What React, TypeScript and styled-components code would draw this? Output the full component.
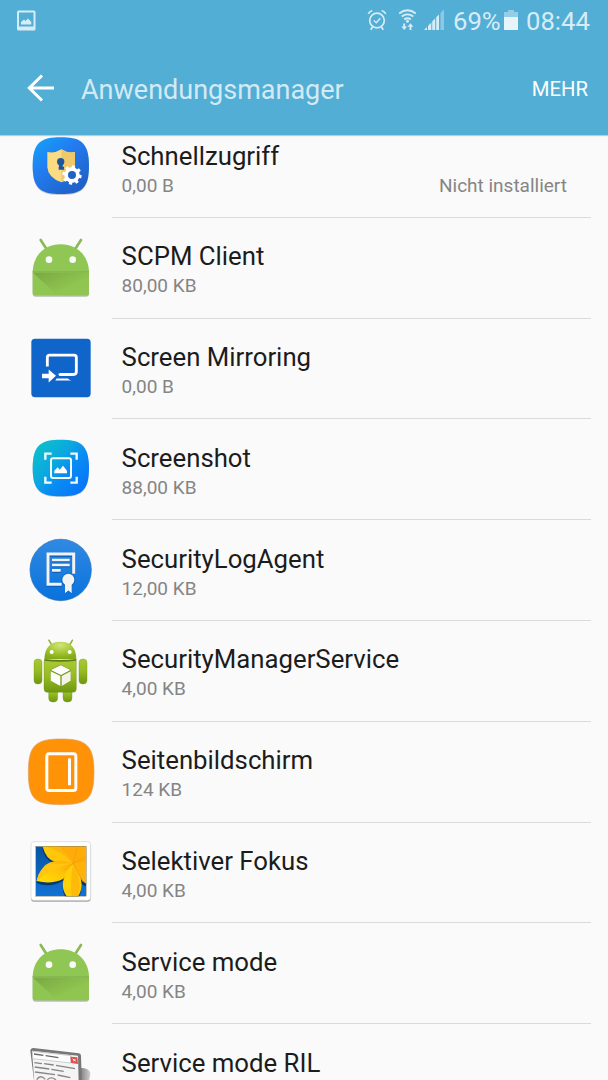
import React from 'react';
import styled, { createGlobalStyle } from 'styled-components';

const GlobalStyle = createGlobalStyle`
  body {
    margin: 0;
    background: #fafafa;
    font-family: Roboto, 'Noto Sans', sans-serif;
  }
`;

const Screen = styled.div`
  display: flex;
  flex-direction: column;
  width: 608px;
  height: 1080px;
  overflow: hidden;
  background: #fafafa;
`;

const Header = styled.header`
  flex: none;
  position: relative;
  height: 135px;
  background: #52aed4;
  box-shadow: 0 1px 1px rgba(0, 0, 0, 0.2);
  z-index: 1;
`;

const StatusBar = styled.div`
  display: flex;
  align-items: center;
  height: 40px;
  padding: 0 18px 0 16px;
  color: #d6ecf6;
`;

const StatusText = styled.span<{ $width: number }>`
  width: ${props => props.$width}px;
  font-size: 25.7px;
  line-height: 40px;
  padding-top: 1px;
  white-space: nowrap;
`;

const Spacer = styled.div`
  flex: 1;
`;

const StatusIcon = styled.svg<{ $gap?: number }>`
  display: block;
  flex: none;
  margin-right: ${props => props.$gap || 0}px;
`;

const AppBar = styled.div`
  display: flex;
  align-items: center;
  height: 95px;
  padding: 0 20px 0 26px;
`;

const BackButton = styled.button`
  display: flex;
  width: 55px;
  padding: 0;
  border: 0;
  background: none;
`;

const Title = styled.h1`
  flex: 1;
  margin: 0;
  padding-top: 4px;
  color: #d3eaf5;
  font-size: 27px;
  font-weight: 400;
  line-height: 36px;
`;

const MoreButton = styled.button`
  padding: 2px 0 0;
  border: 0;
  background: none;
  color: #fff;
  font-family: inherit;
  font-size: 20.3px;
  line-height: 28px;
`;

const List = styled.ul`
  margin: -18px 0 0;
  padding: 0;
  list-style: none;
`;

const Row = styled.li`
  display: flex;
  height: 100.8px;
`;

const IconBox = styled.div`
  flex: none;
  display: flex;
  align-items: center;
  box-sizing: border-box;
  width: 112px;
  padding: 0 0 1px 20px;
`;

const Content = styled.div`
  flex: 1;
  box-sizing: border-box;
  margin-right: 17px;
  padding: 22.5px 24px 0 9.6px;
  border-bottom: 1px solid #dadada;
`;

const Name = styled.div`
  color: #1c1c1c;
  font-size: 25.75px;
  line-height: 32px;
`;

const Details = styled.div`
  display: flex;
  justify-content: space-between;
  margin-top: 2px;
  color: #858585;
  font-size: 19px;
  line-height: 24px;
`;

interface ArtProps {
  top: number;
  children: React.ReactNode;
}

const Art = ({ top, children }: ArtProps) => (
  <svg width="90" height="80" viewBox={`0 ${top} 270 240`} overflow="visible">
    {children}
  </svg>
);

const SQUIRCLE =
  'M123 22C176 22 207 32 207 107C207 178 182 192 123 192C64 192 38 178 38 107C38 36 64 22 123 22Z';

const ShieldIcon = () => (
  <Art top={-9}>
    <defs>
      <linearGradient id="shieldBg" x1="0" y1="0" x2="0.8" y2="1">
        <stop offset="0" stopColor="#12a5fb" />
        <stop offset="0.45" stopColor="#237bef" />
        <stop offset="1" stopColor="#1e5fc4" />
      </linearGradient>
    </defs>
    <path d={SQUIRCLE} fill="#c9cbd0" transform="translate(0 3)" />
    <path d={SQUIRCLE} fill="url(#shieldBg)" />
    <path d="M124 58Q144 71 165 66V112Q162 144 124 157Q84 143 82 112V66Q104 71 124 58Z" fill="#fbdc82" />
    <path d="M124 58Q144 71 165 66V112Q162 144 124 157Z" fill="#efc969" />
    <circle cx="122" cy="95" r="11" fill="#1b559f" />
    <path d="M117 98h11v12h4v9h-16v-9h1z" fill="#1b559f" />
    <g fill="#fff">
      <circle cx="156" cy="135" r="23" />
      {[0, 45, 90, 135, 180, 225, 270, 315].map(angle => (
        <rect key={angle} x="151" y="106" width="10" height="15" rx="2" transform={`rotate(${angle + 10} 156 135)`} />
      ))}
    </g>
    <circle cx="156" cy="135" r="12" fill="#2163c0" />
  </Art>
);

const AndroidIcon = () => (
  <Art top={-7}>
    <defs>
      <linearGradient id="droidFold" x1="0" y1="0" x2="0.7" y2="0.6">
        <stop offset="0" stopColor="#78a842" />
        <stop offset="1" stopColor="#8fc550" />
      </linearGradient>
    </defs>
    <path d="M38 123V190Q38 199 47 199H198Q207 199 207 190V123Z" fill="#b7bdb2" />
    <path d="M62 29L79 55M183 29L166 55" stroke="#8bb956" strokeWidth="8" strokeLinecap="round" />
    <path d="M38 123C40 73 76 42 122 42S205 73 207 123Z" fill="#90c653" />
    <path d="M38 123H207V187Q207 195 199 195H46Q38 195 38 187Z" fill="#8fc651" />
    <path d="M39 127H207V187Q207 195 199 195H112Z" fill="url(#droidFold)" />
    <path d="M38 124.500H207" stroke="#7caf48" strokeWidth="3" />
    <circle cx="87" cy="88" r="10" fill="#fafafa" />
    <circle cx="158" cy="88" r="10" fill="#fafafa" />
  </Art>
);

const MirroringIcon = () => (
  <Art top={-4.5}>
    <rect x="34" y="28" width="178" height="175" rx="11" fill="#1065ca" />
    <path d="M82 111V84Q82 77 89 77H162Q169 77 169 84V127Q169 135 161 135H118" fill="none" stroke="#fff" strokeWidth="8.500" />
    <path d="M66 133H86V120L108 139L86 159V146H66Z" fill="#fff" />
    <path d="M113 131L126 139H118Z" fill="#fff" />
    <path d="M110 147H144Q146 152 155 153H106Z" fill="#fff" />
  </Art>
);

const ScreenshotIcon = () => (
  <Art top={-2}>
    <defs>
      <linearGradient id="shotBg" x1="0.05" y1="0.1" x2="0.95" y2="0.9">
        <stop offset="0" stopColor="#0cc0c9" />
        <stop offset="0.4" stopColor="#0ba7e1" />
        <stop offset="0.6" stopColor="#098cf2" />
        <stop offset="1" stopColor="#0872fb" />
      </linearGradient>
    </defs>
    <path d={SQUIRCLE} fill="#c5cfd6" transform="translate(0 10)" />
    <path d={SQUIRCLE} fill="url(#shotBg)" transform="translate(0 8)" />
    <path
      d="M76 90V72H95M151 72H170V90M170 141V159H151M95 159H76V141"
      fill="none"
      stroke="#f1fcfd"
      strokeWidth="7"
    />
    <rect x="93" y="86" width="60" height="59" rx="6" fill="none" stroke="#f1fcfd" strokeWidth="6" />
    <path d="M103 131V123L113 113L119 120L129 108L141 123V131Z" fill="#fff" />
  </Art>
);

const LogAgentIcon = () => (
  <Art top={0}>
    <defs>
      <linearGradient id="logBg" x1="0" y1="0" x2="0" y2="1">
        <stop offset="0" stopColor="#318ae2" />
        <stop offset="1" stopColor="#0872dc" />
      </linearGradient>
    </defs>
    <circle cx="122" cy="120" r="93.500" fill="#6b94bd" />
    <circle cx="122" cy="119.500" r="92" fill="url(#logBg)" />
    <path d="M125 163H84V73H160V130" fill="none" stroke="#075bad" strokeWidth="9" transform="translate(0 3)" />
    <path d="M125 163H84V72H161V131" fill="none" stroke="#f2f3f4" strokeWidth="9" />
    <path d="M96 90H149M96 105H149M96 121H122" stroke="#075bad" strokeWidth="8" transform="translate(0 3)" />
    <path d="M96 90H149M96 105H149M96 121H122" stroke="#f2f3f4" strokeWidth="8" />
    <circle cx="145" cy="150" r="21" fill="#0b67c2" />
    <circle cx="145" cy="149" r="18" fill="#f2f2f2" />
    <path d="M135 158H155V190L145 182L135 190Z" fill="#f2f2f2" />
    <path d="M135 191L145 183L155 191" fill="none" stroke="#0964ba" strokeWidth="2" />
  </Art>
);

const RobotIcon = () => (
  <Art top={3}>
    <defs>
      <linearGradient id="robotBody" x1="0" y1="0" x2="0" y2="1">
        <stop offset="0" stopColor="#a8c936" />
        <stop offset="0.5" stopColor="#96bb20" />
        <stop offset="1" stopColor="#6e9711" />
      </linearGradient>
      <radialGradient id="robotHead" cx="0.5" cy="0.2" r="0.75">
        <stop offset="0" stopColor="#d3e47b" />
        <stop offset="0.5" stopColor="#a8ca38" />
        <stop offset="1" stopColor="#84ac18" />
      </radialGradient>
    </defs>
    <g fill="url(#robotBody)" stroke="#6a8b1d" strokeWidth="1">
      <rect x="86" y="165" width="27" height="51" rx="12" />
      <rect x="129" y="165" width="27" height="51" rx="12" />
      <rect x="42" y="87" width="24" height="75" rx="11" />
      <rect x="177" y="87" width="24" height="75" rx="11" />
      <path d="M72 92H169V176Q169 187 158 187H83Q72 187 72 176Z" />
    </g>
    <path d="M87 31L96 46M157 31L148 46" stroke="#94ad45" strokeWidth="5" strokeLinecap="round" />
    <path d="M73 88Q75 35 121 35Q168 35 169 88Z" fill="url(#robotHead)" />
    <path d="M73 87Q121 93 169 87V92Q121 98 73 92Z" fill="#607c1a" />
    <circle cx="95" cy="66" r="6" fill="#fff" />
    <circle cx="149" cy="66" r="6" fill="#fff" />
    <path d="M121 104L153 119V154L122 171L91 154V119Z" fill="#7a9b1f" />
    <path d="M122 106L151 120L123 135L93 120Z" fill="#fff" />
    <path d="M92 124L121 138V168L92 152Z" fill="#fdfdf8" />
    <path d="M152 124L125 138V168L152 152Z" fill="#f1f4e6" />
  </Art>
);

const SidePanelIcon = () => (
  <Art top={5}>
    <path
      d="M123 26C198 26 222 44 222 125C222 206 202 223 123 223C44 223 25 206 25 125C25 44 48 26 123 26Z"
      fill="#ff9207"
      stroke="#dda260"
      strokeWidth="2"
    />
    <rect x="80.500" y="70.500" width="87" height="110" rx="7" fill="none" stroke="#fff" strokeWidth="9" />
    <rect x="144" y="84" width="9" height="81" rx="2" fill="#fff" />
  </Art>
);

const FlowerIcon = () => (
  <Art top={1}>
    <defs>
      <clipPath id="photoClip">
        <rect x="47" y="44" width="152" height="150" />
      </clipPath>
      <linearGradient id="photoBg" x1="0" y1="0" x2="0" y2="1">
        <stop offset="0" stopColor="#0754a1" />
        <stop offset="1" stopColor="#1173d6" />
      </linearGradient>
      <linearGradient id="petal" x1="0" y1="1" x2="1" y2="0">
        <stop offset="0" stopColor="#ffe007" />
        <stop offset="1" stopColor="#ffab09" />
      </linearGradient>
    </defs>
    <rect x="33" y="33" width="179" height="177" rx="9" fill="#a6a6a6" />
    <rect x="33" y="30" width="179" height="176" rx="9" fill="#fff" stroke="#d4d4d4" strokeWidth="2" />
    <g clipPath="url(#photoClip)">
      <rect x="47" y="44" width="152" height="150" fill="url(#photoBg)" />
      <path
        d="M67 44Q75 79 103 91Q64 95 50 148Q90 164 130 141Q124 180 144 199H171Q188 181 184 151Q192 157 199 157V44Z"
        fill="#07386d"
        transform="translate(-1 6)"
      />
      <path d="M67 40Q76 85 109 92Q135 97 160 95Q133 55 117 40Z" fill="#ffc60a" />
      <path d="M110 40H199V96H160Q132 66 110 40Z" fill="#ffac0a" />
      <path d="M160 95Q96 75 69 108Q55 123 50 148Q96 159 130 141Q148 121 160 95Z" fill="url(#petal)" />
      <path d="M160 95Q184 129 185 159Q184 182 171 199H144Q123 174 130 146Q136 119 160 95Z" fill="#ffd006" />
      <path d="M160 95L199 90V157Q177 145 160 95Z" fill="#ffb30a" />
      <path d="M50 148Q91 109 160 95L89 98Q58 112 50 148Z" fill="#ffc511" />
      <path d="M160 95Q149 141 155 199H171Q192 156 160 95Z" fill="#ffb90a" />
      <path d="M77 44Q130 62 160 95L119 44Z" fill="#ffb60c" />
      <path d="M160 95L174 40M160 95L199 76M160 95L190 151M160 95L130 118" stroke="#f49b08" strokeWidth="2" />
    </g>
    <rect x="47" y="44" width="152" height="150" fill="none" stroke="#746c39" strokeWidth="1" />
  </Art>
);

const DocumentIcon = () => (
  <Art top={42}>
    <defs>
      <linearGradient id="docShadow" x1="0" y1="0" x2="1" y2="0">
        <stop offset="0" stopColor="#808080" />
        <stop offset="1" stopColor="#d0d0d0" />
      </linearGradient>
    </defs>
    <path d="M181 143Q212 144 211 164L196 230H181Z" fill="url(#docShadow)" />
    <path d="M31 92Q32 84 40 84L177 100Q183 101 183 108L187 230H48Z" fill="#777" />
    <path d="M36 92L174 107L177 230H46Z" fill="#f4f4f4" />
    <path d="M37 94L153 107V129L38 116Z" fill="#fff" stroke="#b6b6b6" strokeWidth="2" />
    <path d="M42 102L70 106M77 107L115 113" stroke="#666" strokeWidth="4" />
    <path d="M151 110L172 112L174 132L153 129Z" fill="#e14f48" />
    <path d="M158 117L167 123M166 118L160 123" stroke="#fff" strokeWidth="3" />
    <path
      d="M43 128L66 131M72 131L101 135M108 136L165 146M44 141L88 147M94 148L131 154M45 156L105 164M113 165L151 173"
      stroke="#858585"
      strokeWidth="4"
    />
    <path d="M50 179Q61 162 76 178M82 179Q94 168 108 180" fill="none" stroke="#8c8c8c" strokeWidth="4" />
  </Art>
);

const apps = [
  { name: 'Schnellzugriff', size: '0,00 B', note: 'Nicht installiert', Icon: ShieldIcon },
  { name: 'SCPM Client', size: '80,00 KB', Icon: AndroidIcon },
  { name: 'Screen Mirroring', size: '0,00 B', Icon: MirroringIcon },
  { name: 'Screenshot', size: '88,00 KB', Icon: ScreenshotIcon },
  { name: 'SecurityLogAgent', size: '12,00 KB', Icon: LogAgentIcon },
  { name: 'SecurityManagerService', size: '4,00 KB', Icon: RobotIcon },
  { name: 'Seitenbildschirm', size: '124 KB', Icon: SidePanelIcon },
  { name: 'Selektiver Fokus', size: '4,00 KB', Icon: FlowerIcon },
  { name: 'Service mode', size: '4,00 KB', Icon: AndroidIcon },
  { name: 'Service mode RIL', size: '', Icon: DocumentIcon },
];

const App = () => (
  <Screen>
    <GlobalStyle />
    <Header>
      <StatusBar>
        <StatusIcon width="20" height="21" viewBox="0 0 20 21">
          <path
            fillRule="evenodd"
            d="M2.500 0.500H18Q19.500 0.500 19.500 2V19Q19.500 20.500 18 20.500H2.500Q1 20.500 1 19V2Q1 0.500 2.500 0.500ZM3 2.500V16.500H17.500V2.500Z"
            fill="currentColor"
          />
          <path d="M5 14.500V12L8 9.500L9.500 11L12 8.500L15.300 12V14.500Z" fill="currentColor" />
        </StatusIcon>
        <Spacer />
        <StatusIcon $gap={11} width="20" height="22" viewBox="0 0 20 22" fill="none" stroke="currentColor">
          <circle cx="10" cy="11.500" r="7.300" strokeWidth="1.700" />
          <path d="M1.200 4.800Q2.500 2.400 5.300 1.500M14.700 1.500Q17.500 2.400 18.800 4.800" strokeWidth="1.600" />
          <path d="M6.800 11.500L9.300 13.800L13.300 9.200" strokeWidth="1.500" />
          <path d="M5.500 18L3.800 20.800M14.500 18L16.200 20.800" strokeWidth="1.800" />
        </StatusIcon>
        <StatusIcon $gap={7} width="19" height="22" viewBox="0 0 19 22" fill="none" stroke="currentColor">
          <path
            d="M1.200 4.400Q9.500 -1.800 17.800 4.400M3.700 7.600Q9.500 3.200 15.300 7.600M6.200 10.500Q9.500 8 12.800 10.500"
            strokeWidth="1.900"
          />
          <circle cx="9.500" cy="12.300" r="1.500" fill="currentColor" stroke="none" />
          <path d="M6.200 14.500V19M12.500 21V16" strokeWidth="1.900" />
          <path d="M3.300 17.500H9.100L6.200 21ZM9.600 17.700H15.400L12.500 14.200Z" fill="currentColor" stroke="none" />
        </StatusIcon>
        <StatusIcon $gap={9} width="20" height="22" viewBox="0 0 20 22" fill="currentColor">
          <path d="M0 21L3 18V21ZM4 17L7.300 13.500V21H4ZM8.200 12.500L11.200 9.300V21H8.200ZM12.200 8.300L15 5.400V21H12.200Z" />
          <path d="M16.500 4L20 0.500V21H16.500Z" opacity="0.450" />
        </StatusIcon>
        <StatusText $width={51}>69%</StatusText>
        <StatusIcon $gap={8} width="14" height="20" viewBox="0 0 14 20" fill="currentColor">
          <path d="M4 0H10V2H14V7H0V2H4Z" opacity="0.500" />
          <path d="M0 7H14V20H0Z" fill="#e7f5fa" />
        </StatusIcon>
        <StatusText $width={64}>08:44</StatusText>
      </StatusBar>
      <AppBar>
        <BackButton aria-label="Zurück">
          <svg width="29" height="28" viewBox="0 0 29 28" fill="none" stroke="#fff" strokeWidth="3">
            <path d="M16 1.500L3.300 14L16 26.500M3 14H28" />
          </svg>
        </BackButton>
        <Title>Anwendungsmanager</Title>
        <MoreButton>MEHR</MoreButton>
      </AppBar>
    </Header>
    <List>
      {apps.map(({ name, size, note, Icon }) => (
        <Row key={name}>
          <IconBox>
            <Icon />
          </IconBox>
          <Content>
            <Name>{name}</Name>
            <Details>
              <span>{size}</span>
              {note && <span>{note}</span>}
            </Details>
          </Content>
        </Row>
      ))}
    </List>
  </Screen>
);

export default App;
